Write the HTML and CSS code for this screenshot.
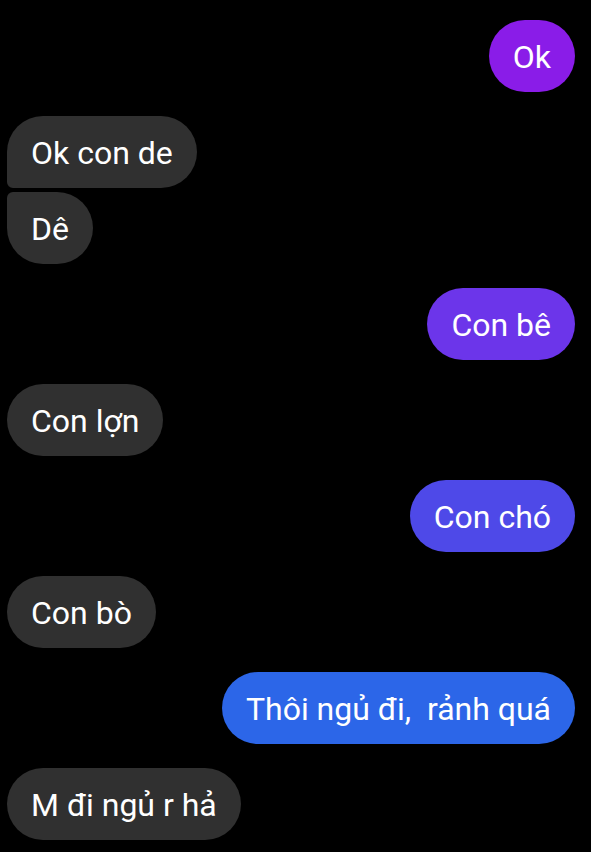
FILE: index.html
```html
<!DOCTYPE html>
<html lang="vi">
<head>
<meta charset="utf-8">
<link rel="stylesheet" href="styles.css">
</head>
<body>
<div class="chat">
  <div class="msg out"><div class="bubble c1">Ok</div></div>
  <div class="msg in">
    <div class="bubble first">Ok con de</div>
    <div class="bubble last">Dê</div>
  </div>
  <div class="msg out"><div class="bubble c2">Con bê</div></div>
  <div class="msg in"><div class="bubble">Con lợn</div></div>
  <div class="msg out"><div class="bubble c3">Con chó</div></div>
  <div class="msg in"><div class="bubble">Con bò</div></div>
  <div class="msg out"><div class="bubble c4">Thôi ngủ đi,&nbsp; rảnh quá</div></div>
  <div class="msg in"><div class="bubble">M đi ngủ r hả</div></div>
</div>
</body>
</html>
```
FILE: styles.css
```css
html, body {
  margin: 0;
  padding: 0;
  background: #000;
  height: 100%;
}
body {
  font-family: Roboto, "Noto Sans", sans-serif;
  color: #fff;
  overflow: hidden;
}
.chat {
  display: flex;
  flex-direction: column;
  gap: 24px;
  padding: 20px 16px 0 7px;
}
.msg {
  display: flex;
  flex-direction: column;
  gap: 4px;
}
.msg.out { align-items: flex-end; }
.msg.in { align-items: flex-start; }
.bubble {
  height: 72px;
  box-sizing: border-box;
  padding: 2px 24px 0;
  border-radius: 36px;
  display: flex;
  align-items: center;
  font-size: 32px;
  line-height: 1;
  background: #303030;
  white-space: nowrap;
}
.bubble.first { border-bottom-left-radius: 6px; }
.bubble.last { border-top-left-radius: 6px; }
.c1 { background: #8a1ce8; }
.c2 { background: #6c35ea; }
.c3 { background: #4e49e8; }
.c4 { background: #2c66e8; }
```
